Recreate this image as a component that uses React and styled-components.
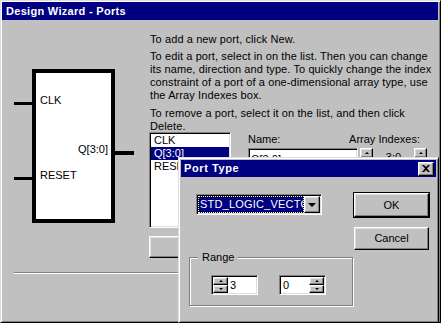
import React from "react";
import styled, { createGlobalStyle, css } from "styled-components";

const GlobalStyle = createGlobalStyle`
  * { box-sizing: border-box; }
  html, body {
    margin: 0;
    padding: 0;
    background: #c0c0c0;
  }
  body {
    font-family: "Liberation Sans", Arial, sans-serif;
    font-size: 11px;
    line-height: 13px;
    color: #000;
  }
`;

const raised = css`
  background: #c0c0c0;
  border: 1px solid;
  border-color: #fff #000 #000 #fff;
  box-shadow: inset -1px -1px #808080, inset 1px 1px #dfdfdf;
`;

const sunken = css`
  border: 1px solid;
  border-color: #808080 #fff #fff #808080;
  box-shadow: inset 1px 1px #000, inset -1px -1px #dfdfdf;
`;

const Window = styled.div`
  position: relative;
  width: 441px;
  height: 323px;
  display: flex;
  flex-direction: column;
  padding: 1px 2px 2px 1px;
  border: 1px solid;
  border-color: #dfdfdf #000 #000 #dfdfdf;
  box-shadow: inset 1px 1px #fff, inset -1px -1px #808080;
`;

const TitleBar = styled.div`
  display: flex;
  align-items: center;
  justify-content: space-between;
  height: ${(p) => p.$h}px;
  flex-shrink: 0;
  padding-left: ${(p) => p.$pad}px;
  background: #000080;
  color: #fff;
  font-weight: bold;
  letter-spacing: ${(p) => p.$ls}px;
  white-space: nowrap;
`;

const Body = styled.div`
  display: flex;
  flex-direction: column;
  flex: 1;
`;

const TopRow = styled.div`
  display: flex;
  align-items: flex-start;
`;

/* component symbol on the left */
const Diagram = styled.div`
  width: 148px;
  flex-shrink: 0;
  padding: 49px 0 0 30px;
`;

const Symbol = styled.div`
  position: relative;
  width: 83px;
  height: 154px;
  border: 4px solid #000;
  background: #fff;
`;

const Pin = styled.div`
  position: absolute;
  top: ${(p) => p.$top}px;
  ${(p) => (p.$right ? "right: -23px;" : "left: -22px;")}
  width: ${(p) => (p.$right ? 19 : 18)}px;
  height: ${(p) => p.$w}px;
  background: #000;
`;

const PinLabel = styled.span`
  position: absolute;
  top: ${(p) => p.$top}px;
  ${(p) => (p.$right ? "right: 3px;" : "left: 4px;")}
  white-space: nowrap;
`;

const RightCol = styled.div`
  flex: 1;
  padding-top: 13px;
`;

const Para = styled.p`
  margin: 0 0 ${(p) => p.$mb ?? 4}px;
  white-space: nowrap;
  letter-spacing: 0.1px;
`;

const ListRow = styled.div`
  display: flex;
  align-items: flex-start;
  margin-top: -1px;
`;

const ListBox = styled.div`
  ${sunken};
  width: 82px;
  height: 96px;
  margin-left: -1px;
  padding: 1px;
  background: #fff;
`;

const ListItem = styled.div`
  height: 13px;
  padding-left: 3px;
  white-space: nowrap;
  overflow: hidden;
  background: ${(p) => (p.$sel ? "#000080" : "transparent")};
  color: ${(p) => (p.$sel ? "#fff" : "#000")};
`;

const Fields = styled.div`
  margin: 1px 0 0 17px;
`;

const LabelRow = styled.div`
  display: flex;
  justify-content: space-between;
  width: 172px;
  margin-bottom: 2px;
`;

const ControlRow = styled.div`
  display: flex;
  align-items: flex-start;
`;

const TextInput = styled.div`
  ${sunken};
  width: ${(p) => p.$w}px;
  height: 20px;
  padding: 2px 0 0 2px;
  background: #fff;
  line-height: 16px;
`;

const SpinStack = styled.div`
  display: flex;
  flex-direction: column;
  width: ${(p) => p.$w}px;
  flex-shrink: 0;
  margin-left: ${(p) => p.$ml || 0}px;
`;

const SpinBtn = styled.div`
  ${raised};
  height: ${(p) => p.$h}px;
  display: flex;
  align-items: center;
  justify-content: center;

  &::after {
    content: "";
    width: 0;
    height: 0;
    border-left: 2px solid transparent;
    border-right: 2px solid transparent;
    ${(p) =>
      p.$down
        ? "border-top: 2px solid #000;"
        : "border-bottom: 2px solid #000;"}
  }
`;

const IndexValue = styled.div`
  width: 41px;
  text-align: center;
  padding-top: 3px;
`;

const PushButton = styled.button`
  ${raised};
  width: ${(p) => p.$w || 75}px;
  height: ${(p) => p.$h || 23}px;
  margin-top: ${(p) => p.$mt || 0}px;
  margin-left: ${(p) => p.$ml || 0}px;
  padding: 0;
  font: inherit;
  color: #000;
  ${(p) =>
    p.$default &&
    css`
      box-shadow: inset -1px -1px #808080, inset 1px 1px #dfdfdf,
        0 0 0 1px #000;
    `}
`;

const Separator = styled.div`
  height: 2px;
  margin: 14px 2px 0 12px;
  border-top: 1px solid #808080;
  border-bottom: 1px solid #fff;
`;

/* the modal "Port Type" dialog, lying over the wizard */
const Dialog = styled.div`
  position: absolute;
  left: 177px;
  top: 156px;
  width: 261px;
  height: 166px;
  display: flex;
  flex-direction: column;
  padding: 2px;
  background: #c0c0c0;
  border: 1px solid;
  border-color: #dfdfdf #000 #000 #dfdfdf;
  box-shadow: inset 1px 1px #fff, inset -1px -1px #808080;
`;

const CloseBtn = styled.div`
  ${raised};
  width: 16px;
  height: 14px;
  margin-right: 2px;
  display: flex;
  align-items: center;
  justify-content: center;
`;

const DialogBody = styled.div`
  display: flex;
`;

const LeftPane = styled.div`
  width: 173px;
  flex-shrink: 0;
`;

const Combo = styled.div`
  ${sunken};
  display: flex;
  width: 126px;
  height: 21px;
  margin: 17px 0 0 15px;
  padding: 1px;
  background: #fff;
`;

const ComboValue = styled.div`
  flex: 1;
  overflow: hidden;
  white-space: nowrap;
  padding-left: 1px;
  line-height: 15px;
  letter-spacing: 0.2px;
  background: #000080;
  color: #fff;
  border: 1px dotted #ffff60;
`;

const ComboArrow = styled.div`
  ${raised};
  width: 16px;
  display: flex;
  align-items: center;
  justify-content: center;

  &::after {
    content: "";
    width: 0;
    height: 0;
    border-left: 4px solid transparent;
    border-right: 4px solid transparent;
    border-top: 4px solid #000;
  }
`;

const GroupBox = styled.div`
  width: 164px;
  height: 49px;
  margin: 42px 0 0 8px;
  border: 1px solid #808080;
  box-shadow: 1px 1px 0 #fff, inset 1px 1px 0 #fff;
`;

const GroupLabel = styled.div`
  width: fit-content;
  margin: -7px 0 0 8px;
  padding: 0 4px;
  background: #c0c0c0;
`;

const SpinRow = styled.div`
  display: flex;
  gap: 21px;
  margin: 11px 0 0 21px;
`;

const SpinBox = styled.div`
  ${sunken};
  display: flex;
  flex-direction: ${(p) => (p.$reverse ? "row-reverse" : "row")};
  width: 47px;
  height: 20px;
  padding: 1px;
  background: #fff;
`;

const SpinValue = styled.div`
  flex: 1;
  padding-left: 2px;
  line-height: 16px;
`;

const RightPane = styled.div`
  padding-top: 16px;
  display: flex;
  flex-direction: column;
`;

const CloseIcon = () => (
  <svg width="8" height="7" viewBox="0 0 8 7">
    <path d="M0 0h2l2 2 2-2h2L5 3.5 8 7H6L4 5 2 7H0l3-3.5z" fill="#000" />
  </svg>
);

export default function App() {
  return (
    <>
      <GlobalStyle />
      <Window>
        <TitleBar $h={18} $pad={4} $ls={0.3}>
          Design Wizard - Ports
        </TitleBar>
        <Body>
          <TopRow>
            <Diagram>
              <Symbol>
                <Pin $top={29} $w={3} />
                <Pin $top={104} $w={3} />
                <Pin $top={78} $w={4} $right />
                <PinLabel $top={21}>CLK</PinLabel>
                <PinLabel $top={96}>RESET</PinLabel>
                <PinLabel $top={70} $right>
                  Q[3:0]
                </PinLabel>
              </Symbol>
            </Diagram>
            <RightCol>
              <Para>To add a new port, click New.</Para>
              <Para $mb={5}>
                To edit a port, select in on the list. Then you can change
                <br />
                its name, direction and type. To quickly change the index
                <br />
                constraint of a port of a one-dimensional array type, use
                <br />
                the Array Indexes box.
              </Para>
              <Para $mb={0}>
                To remove a port, select it on the list, and then click
                <br />
                Delete.
              </Para>
              <ListRow>
                <ListBox>
                  <ListItem>CLK</ListItem>
                  <ListItem $sel>Q[3:0]</ListItem>
                  <ListItem>RESET</ListItem>
                </ListBox>
                <Fields>
                  <LabelRow>
                    <span>Name:</span>
                    <span>Array Indexes:</span>
                  </LabelRow>
                  <ControlRow>
                    <TextInput $w={110}>Q[3:0]</TextInput>
                    <SpinStack $w={13} $ml={2}>
                      <SpinBtn $h={10} />
                      <SpinBtn $h={10} $down />
                    </SpinStack>
                    <IndexValue>3:0</IndexValue>
                    <SpinStack $w={13}>
                      <SpinBtn $h={10} />
                      <SpinBtn $h={10} $down />
                    </SpinStack>
                  </ControlRow>
                </Fields>
              </ListRow>
              <PushButton $mt={8} $h={22} $w={95} $ml={-1}>
                New
              </PushButton>
            </RightCol>
          </TopRow>
          <Separator />
        </Body>

        <Dialog>
          <TitleBar $h={17} $pad={3} $ls={0.6}>
            Port Type
            <CloseBtn>
              <CloseIcon />
            </CloseBtn>
          </TitleBar>
          <DialogBody>
            <LeftPane>
              <Combo>
                <ComboValue>STD_LOGIC_VECTOR</ComboValue>
                <ComboArrow />
              </Combo>
              <GroupBox>
                <GroupLabel>Range</GroupLabel>
                <SpinRow>
                  <SpinBox>
                    <SpinStack $w={15}>
                      <SpinBtn $h={8} />
                      <SpinBtn $h={8} $down />
                    </SpinStack>
                    <SpinValue>3</SpinValue>
                  </SpinBox>
                  <SpinBox $reverse>
                    <SpinStack $w={15}>
                      <SpinBtn $h={8} />
                      <SpinBtn $h={8} $down />
                    </SpinStack>
                    <SpinValue>0</SpinValue>
                  </SpinBox>
                </SpinRow>
              </GroupBox>
            </LeftPane>
            <RightPane>
              <PushButton $h={24} $default>
                OK
              </PushButton>
              <PushButton $mt={10}>Cancel</PushButton>
            </RightPane>
          </DialogBody>
        </Dialog>
      </Window>
    </>
  );
}
